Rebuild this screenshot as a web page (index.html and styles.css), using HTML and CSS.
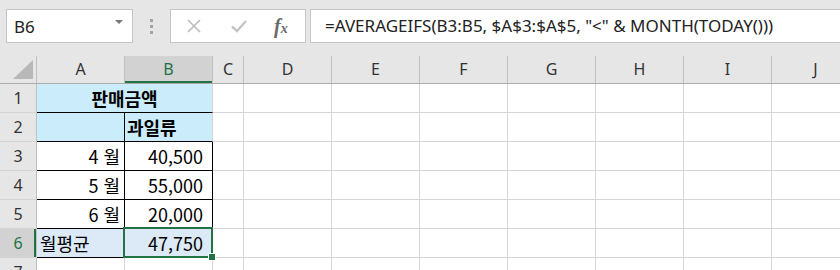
FILE: index.html
```html
<!DOCTYPE html>
<html lang="ko">
<head>
    <meta charset="UTF-8">
    <title>AVERAGEIFS - 월평균</title>
    <link rel="stylesheet" href="styles.css">
</head>
<body>
    <div class="formula-bar">
        <div class="name-box">
            <span class="name-text">B6</span>
            <span class="name-arrow"></span>
        </div>
        <div class="grip"><i></i><i></i><i></i></div>
        <div class="fx-buttons">
            <svg class="ico" width="16" height="16" viewBox="0 0 16 16">
                <path d="M2 2 L14 14 M14 2 L2 14" stroke="#bcbcbc" stroke-width="1.6" fill="none"/>
            </svg>
            <svg class="ico" width="18" height="16" viewBox="0 0 18 16">
                <path d="M2 8.5 L7 13 L16 3" stroke="#c4c4c4" stroke-width="2.4" fill="none"/>
            </svg>
            <span class="fx">f<sub>x</sub></span>
        </div>
        <div class="formula-input">=AVERAGEIFS(B3:B5, $A$3:$A$5, "&lt;" &amp; MONTH(TODAY()))</div>
    </div>

    <table class="sheet">
        <colgroup>
            <col class="c-hdr">
            <col class="c-wide"><col class="c-wide">
            <col class="c-narrow">
            <col class="c-wide"><col class="c-wide"><col class="c-wide"><col class="c-wide">
            <col class="c-wide"><col class="c-wide"><col class="c-wide">
        </colgroup>
        <tr class="col-heads">
            <th class="corner"><span class="tri"></span></th>
            <th>A</th><th class="hl-col">B</th><th>C</th><th>D</th><th>E</th>
            <th>F</th><th>G</th><th>H</th><th>I</th><th>J</th>
        </tr>
        <tr>
            <th class="row-head">1</th>
            <td class="fill-blue bold center bb" colspan="2">판매금액</td>
            <td></td><td></td><td></td><td></td><td></td><td></td><td></td><td></td>
        </tr>
        <tr>
            <th class="row-head">2</th>
            <td class="fill-blue bb br"></td>
            <td class="fill-blue bold bb">과일류</td>
            <td></td><td></td><td></td><td></td><td></td><td></td><td></td><td></td>
        </tr>
        <tr>
            <th class="row-head">3</th>
            <td class="num month bb br">4 월</td>
            <td class="num bb br">40,500</td>
            <td></td><td></td><td></td><td></td><td></td><td></td><td></td><td></td>
        </tr>
        <tr>
            <th class="row-head">4</th>
            <td class="num month bb br">5 월</td>
            <td class="num bb br">55,000</td>
            <td></td><td></td><td></td><td></td><td></td><td></td><td></td><td></td>
        </tr>
        <tr>
            <th class="row-head">5</th>
            <td class="num month bb br">6 월</td>
            <td class="num bb br">20,000</td>
            <td></td><td></td><td></td><td></td><td></td><td></td><td></td><td></td>
        </tr>
        <tr>
            <th class="row-head hl-row">6</th>
            <td class="fill-avg bb br">월평균</td>
            <td class="fill-avg num active">47,750<span class="sel"><span class="handle"></span></span></td>
            <td></td><td></td><td></td><td></td><td></td><td></td><td></td><td></td>
        </tr>
        <tr>
            <th class="row-head">7</th>
            <td></td><td></td><td></td><td></td><td></td><td></td><td></td><td></td><td></td><td></td>
        </tr>
    </table>
</body>
</html>
```

FILE: styles.css
```css
html, body {
    margin: 0;
    padding: 0;
    background: #e6e6e6;
    overflow: hidden;
}
body {
    width: 840px;
    height: 270px;
    font-family: "Noto Sans", "Noto Sans CJK KR", sans-serif;
}

/* formula bar */
.formula-bar {
    display: flex;
    align-items: flex-start;
    height: 56px;
    padding: 9px 0 0 6px;
    box-sizing: border-box;
}
.name-box {
    width: 127px;
    height: 34px;
    box-sizing: border-box;
    background: #fff;
    border: 1px solid #c6c6c6;
    display: flex;
    align-items: center;
    justify-content: space-between;
    padding: 0 9px 0 7px;
}
.name-text {
    font-size: 17px;
    color: #222;
    margin-top: 1px;
}
.name-arrow {
    width: 0;
    height: 0;
    border-left: 4px solid transparent;
    border-right: 4px solid transparent;
    border-top: 4px solid #777;
    margin-top: -8px;
}
.grip {
    width: 37px;
    height: 34px;
    display: flex;
    flex-direction: column;
    align-items: center;
    justify-content: center;
    gap: 3px;
}
.grip i {
    width: 3px;
    height: 3px;
    background: #a4a4a4;
}
.fx-buttons {
    width: 136px;
    height: 34px;
    box-sizing: border-box;
    background: #fff;
    border: 1px solid #c6c6c6;
    display: flex;
    align-items: center;
    padding-left: 15px;
    gap: 28px;
}
.fx {
    font-family: "Liberation Serif", serif;
    font-style: italic;
    font-weight: bold;
    font-size: 20px;
    color: #6a6a6a;
    margin-left: -2px;
}
.fx sub {
    font-size: 14px;
    vertical-align: baseline;
}
.formula-input {
    flex: 1;
    margin-left: 4px;
    margin-right: -20px;
    height: 34px;
    box-sizing: border-box;
    background: #fff;
    border: 1px solid #c6c6c6;
    padding-left: 14px;
    font-size: 17px;
    line-height: 31px;
    color: #222;
    white-space: nowrap;
}

/* grid */
.sheet {
    border-collapse: separate;
    border-spacing: 0;
    table-layout: fixed;
    width: 860px;
    background: #fff;
    font-family: "Noto Sans CJK KR", "Noto Sans", sans-serif;
    font-size: 18px;
    color: #000;
}
.c-hdr { width: 37px; }
.c-wide { width: 88px; }
.c-narrow { width: 31px; }
.sheet th, .sheet td {
    padding: 0;
    box-sizing: border-box;
    border-right: 1px solid #d4d4d4;
    border-bottom: 1px solid #d4d4d4;
    height: 29px;
    line-height: 27px;
    white-space: pre;
    overflow: hidden;
}
.col-heads th {
    background: #e6e6e6;
    height: 28px;
    font-family: "Noto Sans", sans-serif;
    font-weight: normal;
    font-size: 16px;
    color: #333;
    border-right-color: #c0c0c0;
    border-bottom-color: #ababab;
}
.corner {
    position: relative;
}
.tri {
    position: absolute;
    right: 3px;
    bottom: 4px;
    width: 0;
    height: 0;
    border-left: 20px solid transparent;
    border-bottom: 19px solid #b8b8b8;
}
.col-heads th.hl-col {
    background: #d2d2d2;
    color: #217346;
    box-shadow: inset 0 -2px 0 #217346;
}
.row-head {
    background: #e6e6e6;
    font-family: "Noto Sans", sans-serif;
    font-weight: normal;
    font-size: 16px !important;
    color: #333;
    text-align: center;
    border-right-color: #c0c0c0 !important;
}
.row-head.hl-row {
    background: #d2d2d2;
    color: #217346;
    box-shadow: inset -2px 0 0 #217346;
}

.fill-blue { background: #cbecfb; }
.fill-avg { background: #dce9f6; padding-left: 3px !important; }
.bold { font-weight: bold; padding-left: 2px !important; }
.center { text-align: center; padding-left: 0 !important; }
.num { text-align: right; padding-right: 9px !important; }
.month { padding-right: 4px !important; }
.sheet td.bb { border-bottom-color: #000; }
.sheet td.br { border-right-color: #000; }

.sheet td.active {
    position: relative;
    overflow: visible;
}
.sel {
    position: absolute;
    left: -2px;
    top: -2px;
    right: -1px;
    bottom: -1px;
    border: 2px solid #217346;
}
.handle {
    position: absolute;
    right: -5px;
    bottom: -5px;
    width: 6px;
    height: 6px;
    background: #217346;
    border: 1px solid #fff;
}
```
